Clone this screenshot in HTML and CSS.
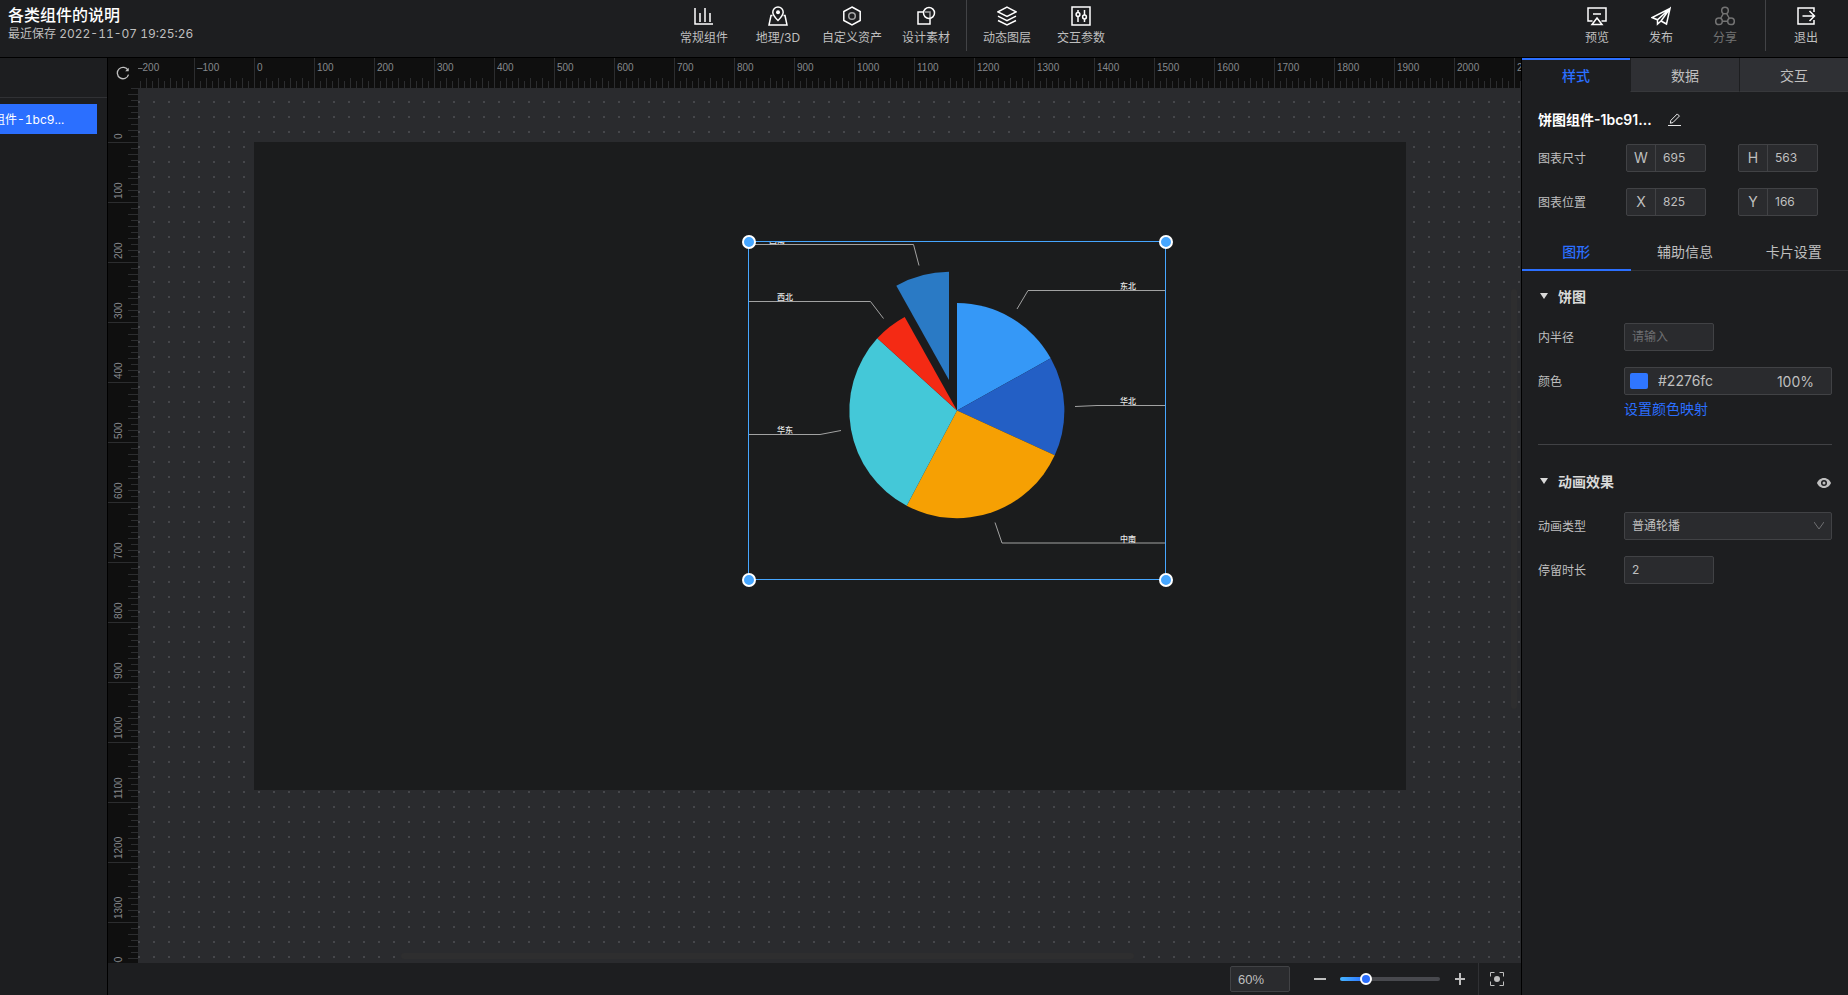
FILE: index.html
```html
<!DOCTYPE html>
<html lang="zh-CN">
<head>
    <meta charset="UTF-8">
    <meta name="viewport" content="width=device-width, initial-scale=1.0">
    <title>各类组件的说明</title>
    <link rel="stylesheet" href="styles.css">
</head>
<body>
    <header class="topbar">
        <div class="project">
            <h1>各类组件的说明</h1>
            <p>最近保存 2022-11-07 19:25:26</p>
        </div>
        <nav class="tools">
            <button class="tool">
                <svg viewBox="0 0 20 20"><path d="M1 2v16h18M6 16V7M11 16V2M16 16V7"/></svg>
                <span>常规组件</span>
            </button>
            <button class="tool">
                <svg viewBox="0 0 20 20"><path d="M4.500 9.500H3L1 19h18L17 9.500h-1.500"/><path d="M10 14.500C6.500 11 4.800 9 4.800 6.200a5.200 5.200 0 0 1 10.400 0C15.200 9 13.500 11 10 14.500z"/><circle cx="10" cy="6.200" r="2" class="solid"/></svg>
                <span>地理/3D</span>
            </button>
            <button class="tool">
                <svg viewBox="0 0 20 20"><path d="M10 1l8.200 4.500v9L10 19l-8.200-4.500v-9z"/><circle cx="10" cy="10" r="3.300" class="dim"/></svg>
                <span>自定义资产</span>
            </button>
            <button class="tool">
                <svg viewBox="0 0 20 20"><path d="M7 6H2v12h12v-5"/><path d="M9 6h5v6" class="dim"/><circle cx="13" cy="7" r="5.500"/></svg>
                <span>设计素材</span>
            </button>
            <i class="bar-divider"></i>
            <button class="tool">
                <svg viewBox="0 0 20 20"><path d="M10 1.200l9 4.600-9 4.600-9-4.600z"/><path d="M1 10.200l9 4.500 9-4.500M1 14.500l9 4.500 9-4.500"/></svg>
                <span>动态图层</span>
            </button>
            <button class="tool">
                <svg viewBox="0 0 20 20"><path d="M1 1h18v18H1z"/><path d="M7 4v2.500M7 10.500V16M13.500 4v5M13.500 13v3"/><circle cx="7" cy="8.500" r="1.900"/><circle cx="13.500" cy="11" r="1.900"/></svg>
                <span>交互参数</span>
            </button>
        </nav>
        <div class="actions">
            <button class="tool">
                <svg viewBox="0 0 20 20"><path d="M5.500 15H1V2h18v13h-4.500M6 8h8"/><path d="M10 12l5 6.500H5z"/></svg>
                <span>预览</span>
            </button>
            <button class="tool">
                <svg viewBox="0 0 20 20"><path d="M19 2.500L1 11.500l5.500 2.300L19 2.500l-3.500 15.500-5.500-3M6.500 13.800V18l3.500-3M19 2.500L10 15"/></svg>
                <span>发布</span>
            </button>
            <button class="tool" disabled>
                <svg viewBox="0 0 20 20"><circle cx="10" cy="4.500" r="3.300"/><circle cx="4" cy="15.300" r="3.300"/><circle cx="16" cy="15.300" r="3.300"/><path d="M8.400 7.500l-2.800 5M11.600 7.500l2.800 5M7.500 15.300h5"/></svg>
                <span>分享</span>
            </button>
            <i class="bar-divider wide"></i>
            <button class="tool">
                <svg viewBox="0 0 20 20"><path d="M18 6V2H2v16h16v-4M6.500 10h12M13.500 5l5 5-5 5"/></svg>
                <span>退出</span>
            </button>
        </div>
    </header>

    <main class="workspace">
        <aside class="layers">
            <div class="layers-inner">
                <div class="layers-head"></div>
                <div class="layer">饼图组件-1bc9...</div>
            </div>
        </aside>

        <section class="editor">
            <button class="reset" aria-label="重置">
                <svg viewBox="0 0 16 16"><path d="M13.800 5A6.500 6.500 0 1 0 14.300 9.800"/><path d="M14.500 2v4h-4z" class="solid"/></svg>
            </button>
            <div class="ruler ruler-x">
                <span>–200</span><span>–100</span><span>0</span><span>100</span><span>200</span><span>300</span><span>400</span><span>500</span><span>600</span><span>700</span><span>800</span><span>900</span><span>1000</span><span>1100</span><span>1200</span><span>1300</span><span>1400</span><span>1500</span><span>1600</span><span>1700</span><span>1800</span><span>1900</span><span>2000</span><span>2100</span>
            </div>
            <div class="ruler ruler-y">
                <span>0</span><span>100</span><span>200</span><span>300</span><span>400</span><span>500</span><span>600</span><span>700</span><span>800</span><span>900</span><span>1000</span><span>1100</span><span>1200</span><span>1300</span><span>1400</span>
            </div>
            <div class="canvas">
                <div class="artboard">
                    <div class="widget">
                        <svg class="pie" viewBox="0 0 418 339">
                            <g class="slices">
                                <path fill="#3598f7" d="M209 169.500V62A107.500 107.500 0 0 1 302.700 117.300z"/>
                                <path fill="#235fc5" d="M209 169.500L302.700 117.300A107.500 107.500 0 0 1 306.700 214.300z"/>
                                <path fill="#f6a003" d="M209 169.500L306.700 214.300A107.500 107.500 0 0 1 158.700 264.700z"/>
                                <path fill="#44c8d8" d="M209 169.500L158.700 264.700A107.500 107.500 0 0 1 129.300 97.300z"/>
                                <path fill="#f42a14" d="M209 169.500L129.300 97.300A107.500 107.500 0 0 1 156.700 76z"/>
                                <path fill="#2a7ac5" d="M201 139L148.300 44.700A107.500 107.500 0 0 1 201 30.700z"/>
                            </g>
                            <g class="leaders">
                                <path d="M269 68L280 49.500H417"/>
                                <path d="M327 165.500L349 164.500H417"/>
                                <path d="M247 281.500L254 302H417"/>
                                <path d="M93 189.500L72 193.500H1"/>
                                <path d="M135.500 77.500L122.500 60.500H1"/>
                                <path d="M171 24.500L165.500 3.500H1"/>
                            </g>
                            <g class="names">
                                <text x="372" y="48">东北</text>
                                <text x="372" y="163">华北</text>
                                <text x="372" y="301">中南</text>
                                <text x="29" y="192">华东</text>
                                <text x="29" y="59">西北</text>
                                <text x="21" y="2">西南</text>
                            </g>
                        </svg>
                        <i class="handle top left"></i>
                        <i class="handle top right"></i>
                        <i class="handle bottom left"></i>
                        <i class="handle bottom right"></i>
                    </div>
                </div>
                <i class="scroll scroll-x"></i>
                <i class="scroll scroll-y"></i>
            </div>
            <footer class="zoombar">
                <input class="field zoom-value" type="text" value="60%" aria-label="缩放比例">
                <button class="zoom-btn" aria-label="缩小"><svg viewBox="0 0 12 12"><path d="M0 6h12"/></svg></button>
                <input class="zoom-range" type="range" min="10" max="230" value="60" aria-label="缩放">
                <button class="zoom-btn" aria-label="放大"><svg viewBox="0 0 12 12"><path d="M1 6h10M6 0v12"/></svg></button>
                <button class="fit" aria-label="适应屏幕">
                    <svg viewBox="0 0 14 14"><path d="M.5 4.500v-4h4M9.500.5h4v4M13.500 9.500v4h-4M4.500 13.500h-4v-4"/><circle cx="7" cy="7" r="3" class="solid"/></svg>
                </button>
            </footer>
        </section>

        <aside class="panel">
            <div class="tabs">
                <button class="tab active">样式</button>
                <button class="tab">数据</button>
                <button class="tab">交互</button>
            </div>
            <div class="basic">
                <div class="name">
                    <h2>饼图组件-1bc91...</h2>
                    <button class="edit" aria-label="重命名">
                        <svg viewBox="0 0 14 14"><path d="M0 13.500h14M2.500 11l.5-3L10 1l2.300 2.300-7 7z"/></svg>
                    </button>
                </div>
                <div class="row">
                    <span class="label">图表尺寸</span>
                    <div class="pair">
                        <div class="field addon"><label for="w">W</label><input id="w" type="text" value="695"></div>
                        <div class="field addon"><label for="h">H</label><input id="h" type="text" value="563"></div>
                    </div>
                </div>
                <div class="row">
                    <span class="label">图表位置</span>
                    <div class="pair">
                        <div class="field addon"><label for="x">X</label><input id="x" type="text" value="825"></div>
                        <div class="field addon"><label for="y">Y</label><input id="y" type="text" value="166"></div>
                    </div>
                </div>
            </div>
            <div class="subtabs">
                <button class="subtab active">图形</button>
                <button class="subtab">辅助信息</button>
                <button class="subtab">卡片设置</button>
            </div>
            <div class="group">
                <h3>饼图</h3>
                <div class="row">
                    <label class="label" for="inner">内半径</label>
                    <input class="field short" id="inner" type="text" placeholder="请输入">
                </div>
                <div class="row">
                    <label class="label" for="color">颜色</label>
                    <div class="field color">
                        <i class="swatch"></i>
                        <input id="color" type="text" value="#2276fc">
                        <span>100%</span>
                    </div>
                </div>
                <a class="mapping" href="#">设置颜色映射</a>
            </div>
            <div class="group">
                <h3>动画效果
                    <svg class="eye" viewBox="0 0 14 10"><path fill-rule="evenodd" d="M7 0C3.500 0 1 2.500 0 5c1 2.500 3.500 5 7 5s6-2.500 7-5c-1-2.500-3.500-5-7-5zm0 8a3 3 0 1 1 0-6 3 3 0 0 1 0 6z"/><circle cx="7" cy="5" r="1.500"/></svg>
                </h3>
                <div class="row">
                    <label class="label" for="anim">动画类型</label>
                    <div class="select">
                        <select class="field" id="anim"><option>普通轮播</option></select>
                        <svg viewBox="0 0 10 8"><path d="M0 0l5 7 5-7"/></svg>
                    </div>
                </div>
                <div class="row">
                    <label class="label" for="stay">停留时长</label>
                    <input class="field short" id="stay" type="text" value="2">
                </div>
            </div>
        </aside>
    </main>
</body>
</html>
```
FILE: styles.css
```css
* {
    box-sizing: border-box;
}

body {
    margin: 0;
    height: 100vh;
    display: flex;
    flex-direction: column;
    overflow: hidden;
    background-color: #1d1e20;
    color: #bfbfbf;
    font-family: Inter, "Noto Sans CJK SC", sans-serif;
    font-size: 12px;
}

h1, h2, h3, p {
    margin: 0;
}

button {
    border: 0;
    padding: 0;
    background: none;
    color: inherit;
    font: inherit;
}

input, select {
    min-width: 0;
    color: inherit;
    font: inherit;
}

svg {
    display: block;
    fill: none;
    stroke: currentColor;
}

.solid {
    fill: currentColor;
    stroke: none;
}

.dim {
    opacity: 0.6;
}

/* top bar */
.topbar {
    display: flex;
    height: 58px;
    flex: none;
    border-bottom: 1px solid #000;
}

.project {
    flex: 1;
    padding: 5px 8px;
}

.project h1 {
    font-size: 16px;
    font-weight: 500;
    line-height: 20px;
    color: #fff;
}

.project p {
    line-height: 18px;
    font-variant-numeric: tabular-nums;
}

.tools {
    display: flex;
}

.actions {
    flex: 1;
    display: flex;
    justify-content: flex-end;
    margin-left: 69px;
    padding-right: 10px;
}

.tool {
    width: 74px;
    display: flex;
    flex-direction: column;
    align-items: center;
    gap: 2px;
    padding-top: 6px;
    line-height: 20px;
}

.tool svg {
    width: 20px;
    height: 20px;
    color: #fff;
    stroke-width: 1.5;
}

.actions .tool {
    width: 64px;
}

.tool:disabled,
.tool:disabled svg {
    color: #737373;
}

.bar-divider {
    width: 1px;
    height: 51px;
    margin: 0 3px;
    background-color: #424346;
}

.bar-divider.wide {
    margin: 0 8px;
}

/* layout */
.workspace {
    flex: 1;
    display: flex;
    min-height: 0;
}

.layers {
    width: 108px;
    flex: none;
    display: flex;
    justify-content: flex-end;
    overflow: hidden;
    border-right: 1px solid #000;
}

.layers-inner {
    width: 240px;
    flex: none;
}

.layers-head {
    height: 40px;
    border-bottom: 1px solid #303134;
}

.layer {
    margin: 6px 10px 0 0;
    padding: 2px 0 0 102px;
    line-height: 28px;
    background-color: #2b6fff;
    color: #fff;
    font-variant-numeric: tabular-nums;
}

/* editor */
.editor {
    flex: 1;
    min-width: 0;
    display: grid;
    grid-template-columns: 30px 1fr;
    grid-template-rows: 30px 1fr 32px;
}

.reset {
    display: flex;
    align-items: center;
    justify-content: center;
    background-color: #0f0f0f;
}

.reset svg {
    width: 14px;
    height: 14px;
    stroke-width: 1.5;
}

.ruler {
    overflow: hidden;
    display: flex;
    background-color: #0f0f0f;
    color: #85888c;
    font-family: "Liberation Sans", sans-serif;
    font-size: 10px;
    line-height: 12px;
}

.ruler span {
    flex: none;
}

.ruler-x span {
    width: 60px;
    height: 30px;
    padding: 4px 0 0 2px;
    border-left: 1px solid #2c2d2f;
    background: repeating-linear-gradient(90deg, transparent 0 5px, #2c2d2f 5px 6px) 0 100% / 100% 7px no-repeat,
        repeating-linear-gradient(90deg, transparent 0 11px, #2c2d2f 11px 12px) 0 100% / 100% 10px no-repeat;
}

.ruler-x span:first-child {
    margin-left: -4px;
}

.ruler-y {
    flex-direction: column;
}

.ruler-y span {
    width: 30px;
    height: 60px;
    padding: 3px 5px 0 0;
    border-top: 1px solid #2c2d2f;
    writing-mode: vertical-rl;
    transform: rotate(180deg);
    background: repeating-linear-gradient(transparent 0 5px, #2c2d2f 5px 6px) 0 0 / 7px 100% no-repeat,
        repeating-linear-gradient(transparent 0 11px, #2c2d2f 11px 12px) 0 0 / 10px 100% no-repeat;
}

.ruler-y span:first-child {
    margin-top: -5px;
}

.canvas {
    position: relative;
    overflow: hidden;
    padding: 54px 0 0 116px;
    background: #2a2b2e radial-gradient(circle at 1px 1px, #46474b 1px, transparent 1px) 0 13px / 15px 15px;
}

.artboard {
    position: relative;
    width: 1152px;
    height: 648px;
    background-color: #1b1c1d;
}

.widget {
    position: absolute;
    left: 494px;
    top: 99px;
    width: 418px;
    height: 339px;
    outline: 1px solid #46a6ff;
    outline-offset: -1px;
}

.pie {
    width: 100%;
    height: 100%;
    overflow: hidden;
}

.slices {
    stroke: none;
}

.leaders {
    stroke: #a2a2a2;
}

.names {
    fill: #e6e6e6;
    stroke: none;
    font-size: 8px;
    font-weight: 500;
}

.handle {
    position: absolute;
    width: 14px;
    height: 14px;
    border: 2px solid #fff;
    border-radius: 50%;
    background-color: #46a6ff;
}

.handle.top {
    top: -6px;
}

.handle.bottom {
    bottom: -7px;
}

.handle.left {
    left: -6px;
}

.handle.right {
    right: -7px;
}

.scroll {
    position: absolute;
    border-radius: 3px;
    background-color: #2e2e2f;
}

.scroll-x {
    left: 19%;
    right: 28%;
    bottom: 4px;
    height: 6px;
}

.scroll-y {
    top: 23%;
    bottom: 29%;
    right: 4px;
    width: 6px;
}

/* zoom bar */
.zoombar {
    grid-column: 1 / 3;
    display: flex;
    align-items: center;
    justify-content: flex-end;
    gap: 14px;
}

.field {
    height: 28px;
    border: 1px solid #414245;
    border-radius: 2px;
    background-color: #2a2b2e;
    color: #bfbfbf;
    padding: 0 7px 1px;
    outline: 0;
}

.zoom-value {
    width: 60px;
    height: 26px;
    margin-right: 10px;
    padding-bottom: 0;
    font-family: "Liberation Sans", sans-serif;
    font-size: 13px;
}

.zoom-btn svg {
    width: 12px;
    height: 12px;
    stroke-width: 2;
}

.zoom-range {
    appearance: none;
    width: 100px;
    height: 4px;
    margin: 0;
    border-radius: 2px;
    background: linear-gradient(90deg, #46b4ff, #2b6fff 26%, #48494e 26%);
}

.zoom-range::-webkit-slider-thumb {
    appearance: none;
    width: 12px;
    height: 12px;
    border: 2px solid #fff;
    border-radius: 50%;
    background-color: #2b6fff;
}

.fit {
    height: 100%;
    margin-left: -2px;
    padding: 0 17px 0 11px;
    border-left: 1px solid #303134;
    display: flex;
    align-items: center;
}

.fit svg {
    width: 14px;
    height: 14px;
}

/* property panel */
.panel {
    width: 327px;
    flex: none;
    border-left: 1px solid #000;
}

.tabs,
.subtabs {
    display: flex;
}

.tab,
.subtab {
    flex: 1;
    font-size: 14px;
}

.tab {
    height: 34px;
    border-left: 1px solid #1d1e20;
    border-bottom: 1px solid #37383b;
    background-color: #2f3034;
}

.tab.active {
    padding-bottom: 2px;
    border-left: 0;
    border-top: 2px solid #2b6fff;
    border-bottom: 0;
    background: none;
    color: #2b6fff;
    font-weight: 500;
}

.basic {
    padding: 17px 16px 0;
}

.name {
    display: flex;
    align-items: center;
    gap: 16px;
    height: 20px;
    margin-bottom: 15px;
    color: #fff;
}

.name h2 {
    font-size: 14px;
    font-weight: 600;
}

.edit svg {
    width: 13px;
    height: 13px;
}

.row {
    display: flex;
    align-items: center;
    height: 28px;
    margin-bottom: 16px;
}

.label {
    width: 86px;
    flex: none;
    padding-bottom: 2px;
}

.pair {
    display: flex;
    gap: 32px;
    padding-left: 2px;
}

.addon {
    display: flex;
    width: 80px;
    padding: 0;
}

.addon label {
    width: 29px;
    flex: none;
    border-right: 1px solid #414245;
    font-size: 14px;
    line-height: 26px;
    text-align: center;
}

.addon input,
.color input {
    flex: 1;
    width: 100%;
    border: 0;
    outline: 0;
    padding: 0 7px 1px;
    background: none;
}

.subtabs {
    margin-top: 20px;
    border-bottom: 1px solid #303134;
}

.subtab {
    height: 35px;
    margin-bottom: -1px;
    padding-bottom: 3px;
    border-bottom: 2px solid transparent;
}

.subtab.active {
    border-bottom-color: #2b6fff;
    color: #2b6fff;
    font-weight: 500;
}

.group {
    margin: 0 16px;
    padding-top: 15px;
}

.group h3 {
    display: flex;
    align-items: center;
    height: 20px;
    margin-bottom: 17px;
    font-size: 14px;
    font-weight: 600;
    color: #d9d9d9;
}

.group + .group {
    padding-top: 26px;
    border-top: 1px solid #414245;
}

.group + .group h3 {
    margin-bottom: 21px;
}

.group h3::before {
    content: "";
    margin: 0 10px 0 2px;
    border: 4px solid transparent;
    border-top: 6px solid #d9d9d9;
    border-bottom: 0;
}

.eye {
    width: 14px;
    height: 10px;
    margin: 3px 1px 0 auto;
    fill: #bfbfbf;
    stroke: none;
}

.short {
    width: 90px;
}

.short::placeholder {
    color: #6e6f72;
}

.color {
    flex: 1;
    min-width: 0;
    display: flex;
    align-items: center;
    padding: 0 17px 0 5px;
    font-size: 14px;
}

.swatch {
    flex: none;
    width: 18px;
    height: 16px;
    border-radius: 2px;
    background-color: #2f76ff;
}

.color input {
    padding-left: 10px;
}

.mapping {
    display: block;
    margin: -12px 0 25px 86px;
    color: #2b6fff;
    font-size: 14px;
    line-height: 20px;
    text-decoration: none;
}

.select {
    position: relative;
    flex: 1;
}

.select select {
    appearance: none;
    width: 100%;
}

.select svg {
    position: absolute;
    right: 8px;
    top: 10px;
    width: 10px;
    height: 8px;
    color: #6e6f72;
}
```
